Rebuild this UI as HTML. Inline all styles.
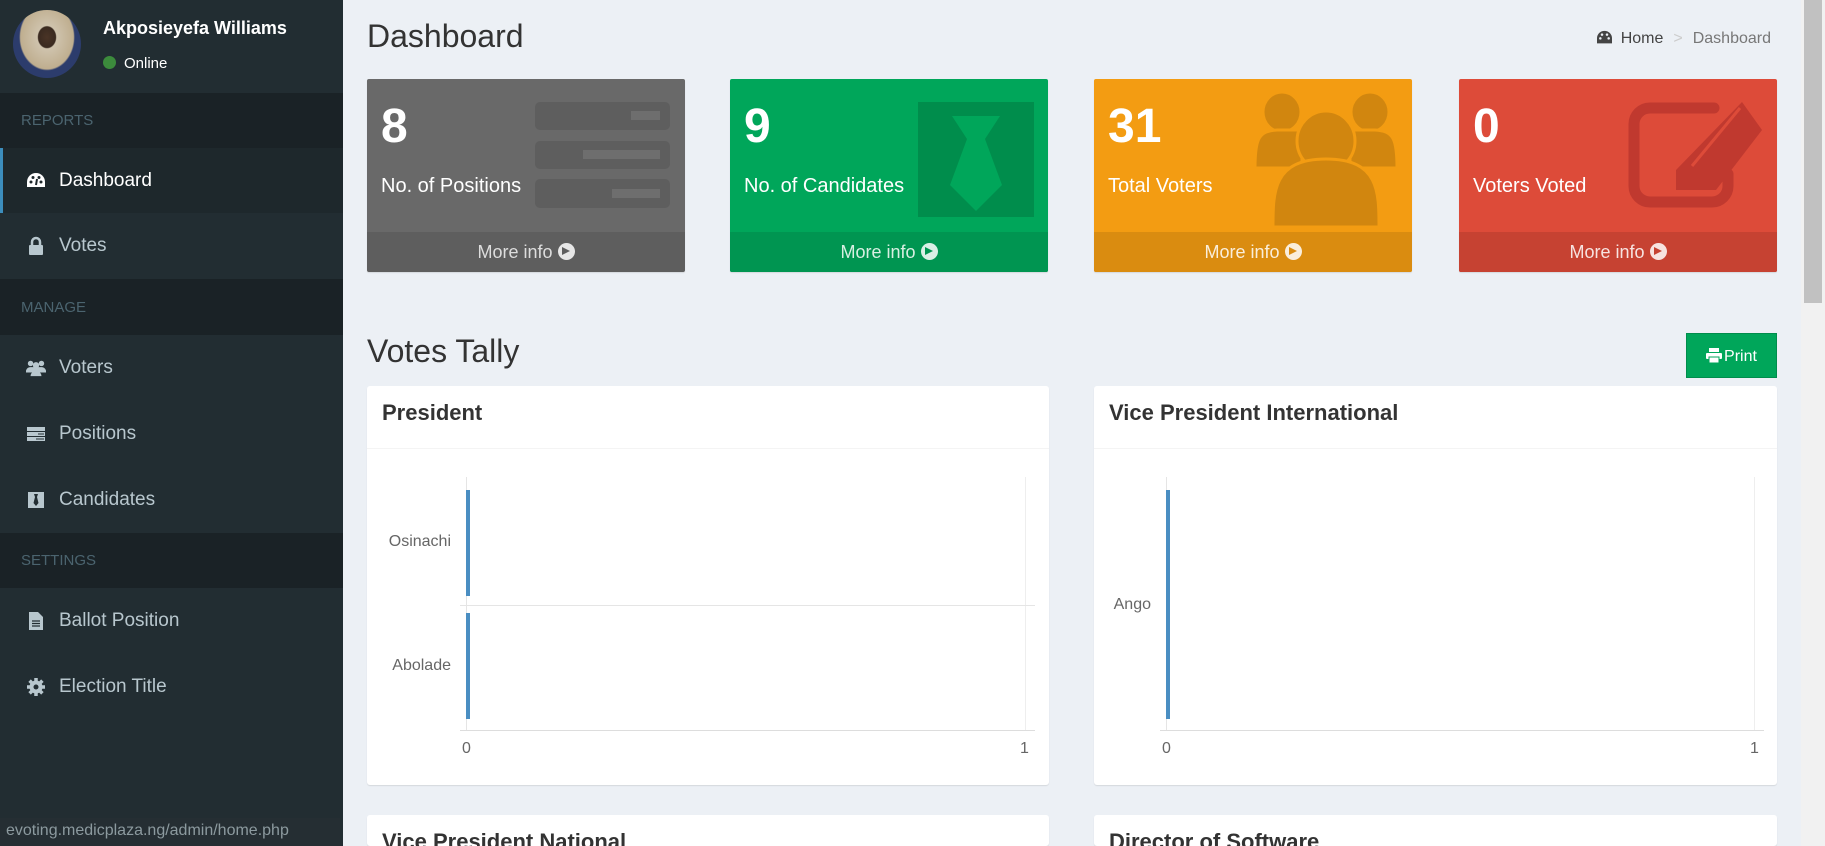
<!DOCTYPE html>
<html><head><meta charset="utf-8">
<style>
*{box-sizing:border-box;margin:0;padding:0}
html{width:1825px;height:846px;overflow:hidden}
body{width:1825px;height:846px;overflow:hidden;background:#ecf0f5;font-family:"Liberation Sans",sans-serif;position:relative}
.sb{position:absolute;left:0;top:0;width:343px;height:846px;background:#222d32}
.user{height:93px;position:relative}
.av{position:absolute;left:13px;top:10px;width:68px;height:68px;border-radius:50%;background:radial-gradient(ellipse at 50% 40%,#4a3426 0,#3a2a20 18%,#cfc3ad 20%,#bfae8f 55%,#2c3c6c 58%)}
.uname{position:absolute;left:103px;top:18px;color:#fff;font-weight:bold;font-size:18px}
.ustat{position:absolute;left:103px;top:55px;color:#fff;font-size:15px}
.ustat i{display:inline-block;width:13px;height:13px;border-radius:50%;background:#3c8b3c;margin-right:8px;vertical-align:-1px}
.hd{background:#1a2226;color:#4b646f;font-size:15px;padding-left:21px;display:flex;align-items:center}
.it{color:#b8c7ce;font-size:19px;display:flex;align-items:center;padding-left:59px;position:relative}
.it.act{color:#fff;background:#1e282c;border-left:3px solid #3c8dbc;padding-left:56px}
.ic{position:absolute;left:26px;width:20px;height:20px}
.main{position:absolute;left:343px;top:0;width:1458px;height:846px;overflow:hidden}
.scroll{position:absolute;right:0;top:0;width:24px;height:846px;background:#f1f1f1}
.scroll div{position:absolute;left:3px;right:3px;top:0;height:303px;background:#c1c1c1}
h1{position:absolute;left:24px;top:18px;font-size:32px;font-weight:normal;color:#333}
.bc{position:absolute;right:30px;top:30px;font-size:16px;color:#444}
.bc span{color:#ccc;margin:0 10px}.bc em{font-style:normal;color:#777}
.box{position:absolute;top:79px;width:318px;height:193px;border-radius:2px;color:#fff;overflow:hidden;box-shadow:0 1px 1px rgba(0,0,0,.1)}
.box .n{position:absolute;left:14px;top:20px;font-size:48px;font-weight:bold}
.box .l{position:absolute;left:14px;top:96px;font-size:20px}
.box .f{position:absolute;left:0;right:0;bottom:0;height:40px;text-align:center;line-height:40px;font-size:18px;color:rgba(255,255,255,.85);background:rgba(0,0,0,.1)}
.arr{display:inline-block;width:17px;height:17px;border-radius:50%;background:rgba(255,255,255,.85);vertical-align:-2px;position:relative}
.arr:after{content:"";position:absolute;left:4px;top:4px;border-left:8px solid;border-top:4.5px solid transparent;border-bottom:4.5px solid transparent;color:inherit}
h2{position:absolute;left:24px;top:333px;font-size:32px;font-weight:normal;color:#333}
.print{position:absolute;left:1343px;top:333px;width:91px;height:45px;background:#00a65a;color:#fff;font-size:16px;line-height:45px;text-align:center;border:1px solid #008d4c}
.card{position:absolute;background:#fff;border-radius:3px;box-shadow:0 1px 1px rgba(0,0,0,.1);overflow:hidden}
.card .t{height:63px;border-bottom:1px solid #f4f4f4;padding:14px 15px;font-size:22px;font-weight:bold;color:#333}
.lbl{position:absolute;font-size:16px;color:#666}
</style></head><body>
<div class="sb">
 <div class="user"><div class="av"></div><div class="uname">Akposieyefa Williams</div><div class="ustat"><i></i>Online</div></div>
 <div class="hd" style="height:55px">REPORTS</div>
 <div class="it act" style="height:65px"><svg class="ic" style="left:23px" viewBox="0 0 20 20"><path d="M10 2A9 9 0 0 0 1 11v5h18v-5a9 9 0 0 0-9-9z" fill="#fff"/><circle cx="5" cy="11" r="1.5" fill="#1e282c"/><circle cx="7" cy="6.5" r="1.5" fill="#1e282c"/><circle cx="13" cy="6.5" r="1.5" fill="#1e282c"/><circle cx="15" cy="11" r="1.5" fill="#1e282c"/><path d="M10 14l1-6" stroke="#1e282c" stroke-width="2"/></svg>Dashboard</div>
 <div class="it" style="height:66px"><svg class="ic" viewBox="0 0 20 20"><rect x="3" y="9" width="14" height="10" rx="1" fill="#b8c7ce"/><path d="M6 9V6a4 4 0 0 1 8 0v3" stroke="#b8c7ce" stroke-width="2.5" fill="none"/></svg>Votes</div>
 <div class="hd" style="height:56px">MANAGE</div>
 <div class="it" style="height:65px"><svg class="ic" viewBox="0 0 22 20"><circle cx="5" cy="5" r="3" fill="#b8c7ce"/><circle cx="17" cy="5" r="3" fill="#b8c7ce"/><circle cx="11" cy="7" r="3.5" fill="#b8c7ce"/><path d="M0 15a5 5 0 0 1 5-6h12a5 5 0 0 1 5 6zM5 19a6 6 0 0 1 12 0z" fill="#b8c7ce"/></svg>Voters</div>
 <div class="it" style="height:67px"><svg class="ic" viewBox="0 0 20 20"><rect x="1" y="3" width="18" height="4" fill="#b8c7ce"/><rect x="1" y="8" width="18" height="4" fill="#b8c7ce"/><rect x="1" y="13" width="18" height="4" fill="#b8c7ce"/><rect x="12" y="9.5" width="6" height="1" fill="#222d32"/><rect x="10" y="14.5" width="8" height="1" fill="#222d32"/></svg>Positions</div>
 <div class="it" style="height:66px"><svg class="ic" viewBox="0 0 20 20"><rect x="2" y="2" width="16" height="16" fill="#b8c7ce"/><path d="M8 4h4l-1 3 1.5 6-2.5 3-2.5-3L9 7z" fill="#222d32"/></svg>Candidates</div>
 <div class="hd" style="height:55px">SETTINGS</div>
 <div class="it" style="height:66px"><svg class="ic" viewBox="0 0 20 20"><path d="M3 1h9l5 5v13H3z" fill="#b8c7ce"/><path d="M6 10h8M6 12.5h8M6 15h8" stroke="#222d32" stroke-width="1.2"/></svg>Ballot Position</div>
 <div class="it" style="height:65px"><svg class="ic" viewBox="0 0 20 20"><circle cx="10" cy="10" r="6.5" fill="#b8c7ce"/><path d="M10 1v18M1 10h18M3.6 3.6l12.8 12.8M16.4 3.6L3.6 16.4" stroke="#b8c7ce" stroke-width="3.5"/><circle cx="10" cy="10" r="2.5" fill="#222d32"/></svg>Election Title</div>
 <div style="position:absolute;left:0;top:818px;width:340px;height:28px;background:#252e33;color:#8c9a9f;font-size:16px;padding:4px 6px">evoting.medicplaza.ng/admin/home.php</div>
</div>
<div class="main">
 <h1>Dashboard</h1>
 <div class="bc"><svg width="17" height="15" viewBox="0 0 20 18" style="vertical-align:-2px;margin-right:8px"><path d="M10 1A9 9 0 0 0 1 10v6h18v-6a9 9 0 0 0-9-9z" fill="#444"/><circle cx="5" cy="10" r="1.5" fill="#ecf0f5"/><circle cx="7" cy="5.5" r="1.5" fill="#ecf0f5"/><circle cx="13" cy="5.5" r="1.5" fill="#ecf0f5"/><circle cx="15" cy="10" r="1.5" fill="#ecf0f5"/></svg>Home<span>&gt;</span><em>Dashboard</em></div>

 <div class="box" style="left:24px;background:#696969">
  <div style="position:absolute;left:168px;top:23px;width:135px;height:28px;background:#5e5e5e;border-radius:5px"><div style="position:absolute;right:10px;top:9px;width:29px;height:9px;background:#6e6e6e"></div></div>
  <div style="position:absolute;left:168px;top:62px;width:135px;height:28px;background:#5e5e5e;border-radius:5px"><div style="position:absolute;right:10px;top:9px;width:77px;height:9px;background:#6e6e6e"></div></div>
  <div style="position:absolute;left:168px;top:100px;width:135px;height:29px;background:#5e5e5e;border-radius:5px"><div style="position:absolute;right:10px;top:10px;width:48px;height:9px;background:#6e6e6e"></div></div>
  <div class="n">8</div><div class="l">No. of Positions</div><div class="f" style="color:#ddd">More info <i class="arr" style="color:#5e5e5e"></i></div></div>

 <div class="box" style="left:387px;background:#00a65a">
  <div style="position:absolute;left:188px;top:23px;width:116px;height:115px;background:#008d4c"><svg width="116" height="115" viewBox="0 0 116 115"><path d="M34 14h48L67 37l17 46-26 26-26-26 17-46z" fill="#00a65a"/></svg></div>
  <div class="n">9</div><div class="l">No. of Candidates</div><div class="f" style="background:#009551;color:#d8efe2">More info <i class="arr" style="color:#009551"></i></div></div>

 <div class="box" style="left:751px;background:#f39c12">
  <svg style="position:absolute;left:160px;top:13px" width="144" height="135" viewBox="0 0 144 135"><g fill="#d1860f" stroke="#f39c12" stroke-width="3"><ellipse cx="28" cy="20" rx="19" ry="20"/><ellipse cx="116" cy="20" rx="19" ry="20"/><path d="M1 76c0-30 4-37 22-38h25v38zM143 76c0-30-4-37-22-38H96v38z"/><ellipse cx="72" cy="49" rx="29" ry="30"/><path d="M19 135c0-35 0-68 53-68s53 33 53 68z"/></g></svg>
  <div class="n">31</div><div class="l">Total Voters</div><div class="f" style="background:#da8c10">More info <i class="arr" style="color:#da8c10"></i></div></div>

 <div class="box" style="left:1116px;background:#dd4b39">
  <svg style="position:absolute;left:169px;top:23px" width="135" height="106" viewBox="0 0 135 106"><path d="M86 6H22A16 16 0 0 0 6 22v62a16 16 0 0 0 16 16h62a16 16 0 0 0 16-16V72" stroke="#c0392f" stroke-width="11" fill="none" stroke-linecap="round"/><path d="M114 0l20 28-46 60H48V68z" fill="#c0392f"/><path d="M64 64l48-58" stroke="#dd4b39" stroke-width="3"/></svg>
  <div class="n">0</div><div class="l">Voters Voted</div><div class="f" style="background:#c64232">More info <i class="arr" style="color:#c64232"></i></div></div>

 <h2>Votes Tally</h2>
 <div class="print"><svg width="16" height="15" viewBox="0 0 16 15" style="vertical-align:-2px;margin-right:2px"><rect x="3" y="0" width="10" height="4" fill="#fff"/><rect x="0" y="5" width="16" height="6" rx="1" fill="#fff"/><rect x="3" y="9" width="10" height="6" fill="#fff" stroke="#00a65a"/></svg>Print</div>

 <div class="card" style="left:24px;top:386px;width:682px;height:399px"><div class="t">President</div>
  <div style="position:absolute;left:99px;top:91px;width:1px;height:253px;background:#e5e5e5"></div>
  <div style="position:absolute;left:658px;top:91px;width:1px;height:253px;background:#eee"></div>
  <div style="position:absolute;left:93px;top:219px;width:575px;height:1px;background:#e5e5e5"></div>
  <div style="position:absolute;left:93px;top:344px;width:575px;height:1px;background:#ddd"></div>
  <div style="position:absolute;left:99px;top:104px;width:4px;height:106px;background:#4a8ec2"></div>
  <div style="position:absolute;left:99px;top:227px;width:4px;height:106px;background:#4a8ec2"></div>
  <div class="lbl" style="right:598px;top:147px">Osinachi</div>
  <div class="lbl" style="right:598px;top:271px">Abolade</div>
  <div class="lbl" style="left:95px;top:354px">0</div><div class="lbl" style="left:653px;top:354px">1</div>
 </div>
 <div class="card" style="left:751px;top:386px;width:683px;height:399px"><div class="t">Vice President International</div>
  <div style="position:absolute;left:72px;top:91px;width:1px;height:253px;background:#e5e5e5"></div>
  <div style="position:absolute;left:660px;top:91px;width:1px;height:253px;background:#eee"></div>
  <div style="position:absolute;left:66px;top:344px;width:604px;height:1px;background:#ddd"></div>
  <div style="position:absolute;left:72px;top:104px;width:4px;height:229px;background:#4a8ec2"></div>
  <div class="lbl" style="right:626px;top:210px">Ango</div>
  <div class="lbl" style="left:68px;top:354px">0</div><div class="lbl" style="left:656px;top:354px">1</div>
 </div>
 <div class="card" style="left:24px;top:815px;width:682px;height:31px"><div class="t">Vice President National</div></div>
 <div class="card" style="left:751px;top:815px;width:683px;height:31px"><div class="t">Director of Software</div></div>
</div>
<div class="scroll"><div></div></div>
</body></html>
